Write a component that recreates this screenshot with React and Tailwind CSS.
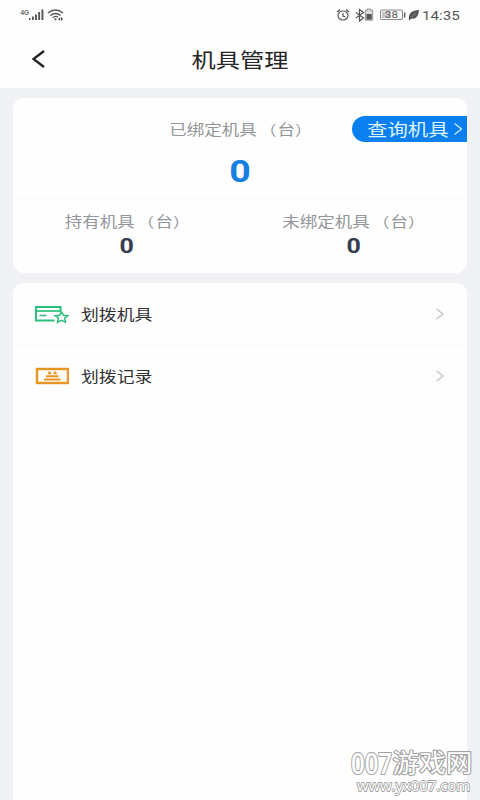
import React from "react";

function StatusBar() {
  return (
    <div className="flex h-[30px] items-center justify-between pl-[20px] pr-[20px] text-[#555]">
      <svg width="46" height="16" viewBox="0 0 46 16" className="shrink-0">
        <text x="0.5" y="7.5" fontSize="7" fontWeight="700" fill="#666" textLength="8.5" lengthAdjust="spacingAndGlyphs" fontFamily="Liberation Sans, sans-serif">4G</text>
        <g fill="#555">
          <rect x="9" y="11" width="1.500" height="2" />
          <rect x="12" y="9.500" width="1.800" height="3.500" />
          <rect x="15" y="7.500" width="1.900" height="5.500" />
          <rect x="18.200" y="5" width="1.900" height="8" />
          <rect x="21.500" y="2.500" width="1.900" height="10.500" />
        </g>
        <g fill="none" stroke="#555" strokeWidth="1.300">
          <path d="M27.800 6Q35.500 0 43 6" />
          <path d="M30.300 8.500Q35.500 4.500 40.500 8.500" />
          <path d="M32.700 10.800Q35.500 8.300 38 10.300" />
        </g>
        <circle cx="35.500" cy="12.300" r="1.100" fill="#555" />
        <path d="M40.200 10l-2.200 2 2.200 2zM41 10l2.200 2-2.200 2z" fill="#555" />
      </svg>
      <div className="flex items-center">
        <svg width="86" height="16" viewBox="0 0 86 16" className="shrink-0">
          <g fill="none" stroke="#555" strokeWidth="1.200">
            <ellipse cx="7" cy="8.500" rx="5" ry="4.500" />
            <path d="M7 6v3l2.500 1M1 5l3-2.500M13 5l-3-2.500" />
            <path d="M20 5.500l7.500 5.500-4 3V2.500l4 3-7.500 5.500" />
          </g>
          <path d="M31.500 3.200V2h3v1.200h2.200v10h-7.400v-10z" fill="#ddd" stroke="#888" strokeWidth="0.900" />
          <rect x="30.500" y="7" width="5.200" height="5.500" fill="#555" />
          <rect x="44.500" y="3" width="22" height="9.500" rx="1.500" fill="none" stroke="#888" strokeWidth="1.100" />
          <rect x="46" y="4.500" width="8" height="6.500" fill="#c4c4c4" />
          <text x="49" y="11" fontSize="9" fill="#555" textLength="13" lengthAdjust="spacingAndGlyphs" fontFamily="Roboto, sans-serif">38</text>
          <rect x="68" y="5.500" width="1.400" height="5" fill="#555" />
          <path d="M73 13C72 6 76 3.500 83 3C82.500 9.500 79.500 12.500 75 11.500L73.500 13.500z" fill="#555" />
          <path d="M76 10L79.500 6.500" stroke="#ccc" strokeWidth="0.500" />
        </svg>
        <span className="w-[38px] origin-left scale-x-[1.120] whitespace-nowrap font-['Roboto',sans-serif] text-[13.500px] leading-4 text-[#555]">14:35</span>
      </div>
    </div>
  );
}

function Label({ name }) {
  return (
    <span className="-translate-x-[0.500px] -translate-y-px scale-x-[1.190] whitespace-nowrap text-[14.700px] leading-[20px] text-[#92959a]">
      {name}
      <span className="ml-[2.500px] inline-block w-[15px] text-[14px]">（</span>台
      <span className="inline-block w-[12.500px] text-[14px]">）</span>
    </span>
  );
}

function Stat({ name, value }) {
  return (
    <div className="flex flex-col items-center">
      <Label name={name} />
      <span className="mt-[3px] scale-x-[1.250] font-['Roboto',sans-serif] text-[20px] font-bold leading-[22px] text-[#373d4e]">{value}</span>
    </div>
  );
}

function Chevron() {
  return (
    <svg width="8" height="12" viewBox="0 0 8 12" fill="none" stroke="#bfbfc2" strokeWidth="1.200">
      <path d="M0.500 1L7 6L0.500 11" />
    </svg>
  );
}

function CardStarIcon() {
  return (
    <svg width="35" height="20" viewBox="0 0 35 20" fill="none" stroke="#2bbd7b" strokeWidth="2">
      <path d="M20.500 16.500H2V3H26.500V7.500" />
      <path d="M2 7H26.500" strokeWidth="1.700" />
      <path d="M5.500 11.500H12.500" strokeWidth="1.500" />
      <path d="M27.500 7.800L29.400 11.200L33.800 11.700L30.600 14.200L31.500 18.200L27.500 16.300L23.500 18.200L24.400 14.200L21.200 11.700L25.600 11.200z" strokeWidth="1.500" />
    </svg>
  );
}

function RecordIcon() {
  return (
    <svg width="35" height="20" viewBox="0 0 35 20" fill="none" stroke="#e69523">
      <rect x="3" y="3" width="31" height="14" strokeWidth="2.400" />
      <path d="M10 13.500H26.500M12 10.300H24.500" strokeWidth="2" />
      <path d="M14 7.200H17.200M19.500 7.200H22.700" strokeWidth="1.900" />
      <path d="M15.600 5V7M21 5V7" strokeWidth="1" />
    </svg>
  );
}

function MenuRow({ icon, label, className }) {
  return (
    <div className={`flex items-center pl-[21px] pr-[23px] ${className}`}>
      {icon}
      <span className="ml-[12px] origin-left scale-x-[1.190] whitespace-nowrap text-[15px] leading-5 text-[#303133]">{label}</span>
      <span className="ml-auto">
        <Chevron />
      </span>
    </div>
  );
}

export default function App() {
  return (
    <div className="relative flex h-[800px] w-[480px] flex-col overflow-hidden bg-[#eff1f5] font-['Noto_Sans_CJK_SC',sans-serif]">
      <div className="h-[88px] shrink-0 bg-[#fefefe]">
        <StatusBar />
        <header className="grid h-[58px] grid-cols-[80px_1fr_80px] items-center">
          <svg width="16" height="20" viewBox="0 0 16 20" fill="none" stroke="#222" strokeWidth="2.300" className="ml-[31px]">
            <path d="M13 2L2.500 10L13 18" />
          </svg>
          <h1 className="translate-y-[0.500px] scale-x-[1.210] text-center text-[20px] leading-7 text-[#252525]">机具管理</h1>
        </header>
      </div>

      <section className="mx-[13px] mt-[10px] h-[175px] shrink-0 overflow-hidden rounded-[11px] bg-[#fefefe]">
        <div className="grid h-[102px] grid-cols-[115px_1fr_115px] items-start border-b border-[#fafafa]">
          <div />
          <div className="flex flex-col items-center pt-[22px]">
            <Label name="已绑定机具" />
            <span className="mt-[16px] scale-x-[1.210] font-['Roboto',sans-serif] text-[31px] font-bold leading-[32px] text-[#1580e2]">0</span>
          </div>
          <button className="mt-[18px] flex h-[26px] items-center rounded-l-full bg-[#0a80f0] pl-[15px] text-[#dff3ff]">
            <span className="w-[87px] origin-left scale-x-[1.200] whitespace-nowrap text-left text-[17px] leading-6">查询机具</span>
            <svg width="9" height="14" viewBox="0 0 9 14" fill="none" stroke="#d3ebff" strokeWidth="1.300" className="shrink-0">
              <path d="M0.500 1.500L7.500 7L0.500 12.500" />
            </svg>
          </button>
        </div>
        <div className="grid grid-cols-2 pt-[12px]">
          <Stat name="持有机具" value="0" />
          <Stat name="未绑定机具" value="0" />
        </div>
      </section>

      <section className="mx-[13px] mt-[10px] grow rounded-t-[11px] bg-[#fefefe]">
        <MenuRow className="h-[62px]" icon={<CardStarIcon />} label="划拨机具" />
        <div className="h-px bg-[#f7f7f8]" />
        <MenuRow className="h-[60px]" icon={<RecordIcon />} label="划拨记录" />
      </section>

      <svg width="130" height="74" viewBox="0 -20 130 74" className="absolute bottom-0 right-0" fill="#fff" stroke="#a2a2a2" strokeWidth="2.200" paintOrder="stroke" strokeLinejoin="round">
        <text x="1" y="27.500" fontSize="29" textLength="41" lengthAdjust="spacingAndGlyphs" fontFamily="Open Sans, sans-serif" fontWeight="600">007</text>
        <text x="42.500" y="26" fontSize="25" textLength="80" lengthAdjust="spacingAndGlyphs" fontFamily="Noto Sans CJK SC, sans-serif" fontWeight="400">游戏网</text>
        <text x="7" y="45" fontSize="15" textLength="113" lengthAdjust="spacingAndGlyphs" fontFamily="Open Sans, sans-serif" fontWeight="500" strokeWidth="1.800">www.yx007.com</text>
      </svg>
    </div>
  );
}
